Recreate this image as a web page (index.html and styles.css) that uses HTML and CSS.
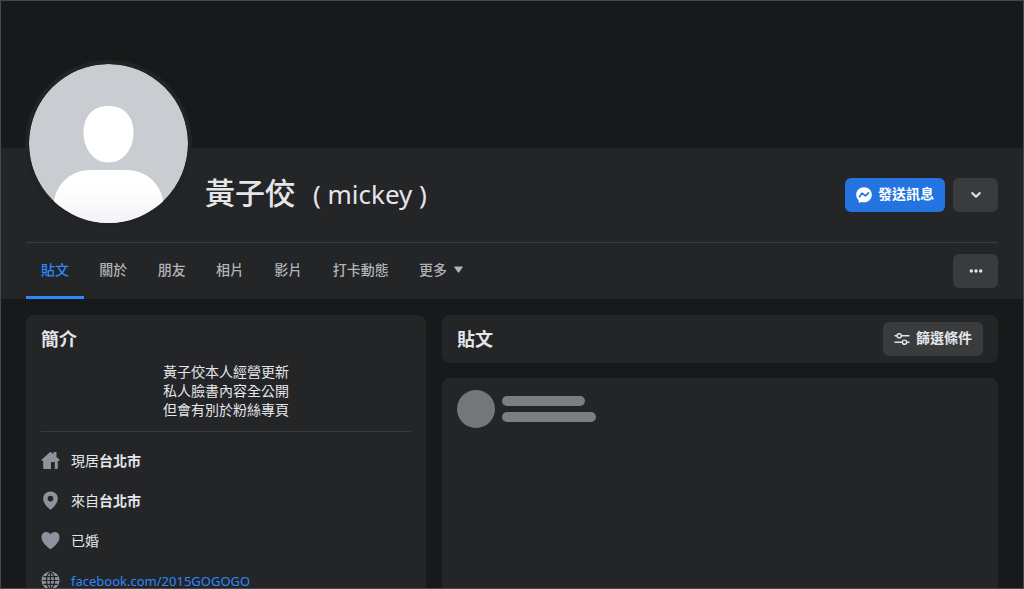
FILE: index.html
```html
<!DOCTYPE html>
<html lang="zh-Hant">
<head>
<meta charset="utf-8">
<meta name="viewport" content="width=device-width, initial-scale=1">
<title>黃子佼 ( mickey )</title>
<link rel="stylesheet" href="styles.css">
</head>
<body>
<div class="page">
  <div class="cover"></div>
  <header class="header">
    <div class="profile">
      <svg class="avatar" viewBox="0 0 167 167" role="img" aria-label="大頭貼照">
        <defs>
          <clipPath id="disc"><circle cx="83.5" cy="83.5" r="79.5"/></clipPath>
          <linearGradient id="shade" x1="0" y1="0" x2="0" y2="1">
            <stop offset="0.3" stop-color="#fff"/><stop offset="1" stop-color="#f1f2f4"/>
          </linearGradient>
        </defs>
        <circle cx="83.5" cy="83.5" r="83.5" fill="#222324"/>
        <g clip-path="url(#disc)">
          <circle cx="83.5" cy="83.5" r="79.5" fill="#c9ccd1"/>
          <path d="M83.5 46C99 46 108.500 56 108.500 73C108.500 89 98 102.500 83.500 102.500S58.500 89 58.500 73C58.500 56 68 46 83.500 46Z" fill="#fff"/>
          <path d="M28 150C28 127 43 110 66 110H101C124 110 139 127 139 150V167H28Z" fill="url(#shade)"/>
        </g>
      </svg>
      <h1 class="name"><span class="name-main">黃子佼</span><span class="name-alt">( mickey )</span></h1>
      <div class="actions">
        <button class="btn btn-primary" type="button">
          <svg class="icon-16" viewBox="0 0 16 16" aria-hidden="true">
            <path d="M8 0.300C3.600 0.300 0.200 3.500 0.200 7.700C0.200 9.900 1.100 11.800 2.600 13.100L2.700 15.100C2.700 15.600 3.200 15.900 3.600 15.700L5.200 15C6.100 15.200 7 15.300 8 15.300C12.400 15.300 15.800 12 15.800 7.700S12.400 0.300 8 0.300Z" fill="#fff"/>
            <path d="M3.500 9.800L6 6.200L9.500 8.900L12.500 5.800" fill="none" stroke="#2374e1" stroke-width="1.700" stroke-linejoin="round" stroke-linecap="round"/>
          </svg>
          <span class="btn-label">發送訊息</span>
        </button>
        <button class="btn btn-icon" type="button" aria-label="更多動作">
          <svg class="icon-16" viewBox="0 0 16 16" aria-hidden="true"><path d="M4.200 6L8 9.800L11.800 6" fill="none" stroke="#e4e6eb" stroke-width="2" stroke-linecap="round" stroke-linejoin="round"/></svg>
        </button>
      </div>
    </div>
    <div class="tabbar">
      <nav class="tabs">
        <a class="tab tab-active" href="#posts" aria-current="page">貼文</a>
        <a class="tab" href="#about">關於</a>
        <a class="tab" href="#friends">朋友</a>
        <a class="tab" href="#photos">相片</a>
        <a class="tab" href="#videos">影片</a>
        <a class="tab" href="#checkins">打卡動態</a>
        <a class="tab" href="#more">更多<svg class="caret" viewBox="0 0 9 7" aria-hidden="true"><path d="M0.800 0.500H8.200Q9 0.700 8.500 1.500L5.200 6.300Q4.500 7 3.800 6.300L0.500 1.500Q0 0.700 0.800 0.500Z" fill="#b0b3b8"/></svg></a>
      </nav>
      <button class="btn btn-icon" type="button" aria-label="更多選項">
        <svg class="icon-16" viewBox="0 0 16 16" aria-hidden="true"><g fill="#e4e6eb"><circle cx="3.300" cy="8" r="1.700"/><circle cx="8" cy="8" r="1.700"/><circle cx="12.700" cy="8" r="1.700"/></g></svg>
      </button>
    </div>
  </header>
  <main class="content">
    <section class="card intro" id="about">
      <h2 class="card-title">簡介</h2>
      <p class="bio">黃子佼本人經營更新<br>私人臉書內容全公開<br>但會有別於粉絲專頁</p>
      <ul class="facts">
        <li class="fact">
          <svg class="fact-icon" viewBox="0 0 20 20" aria-hidden="true"><path d="M9.300 1.300Q10 0.700 10.700 1.300L13 3.300V1.600Q13 1 13.600 1H15.700Q16.300 1 16.300 1.600V6.200L19.300 8.900Q19.900 9.600 19.300 10.200Q19 10.500 18.500 10.500H17.700V18Q17.700 19 16.700 19H14.500V11.500H10.500V19H3.300Q2.300 19 2.300 18V10.500H1.500Q0.900 10.500 0.600 10Q0.300 9.400 0.800 8.900Z"/></svg>
          <span>現居<a class="place" href="#taipei">台北市</a></span>
        </li>
        <li class="fact">
          <svg class="fact-icon" viewBox="0 0 20 20" aria-hidden="true"><path fill-rule="evenodd" d="M10 0.500C5.600 0.500 2.300 3.800 2.300 8C2.300 12.300 5.800 16.300 9.100 19.200Q10 19.900 10.900 19.200C14.200 16.300 17.700 12.300 17.700 8C17.700 3.800 14.400 0.500 10 0.500ZM10 5A3 3 0 1 1 10 11A3 3 0 1 1 10 5Z"/></svg>
          <span>來自<a class="place" href="#taipei">台北市</a></span>
        </li>
        <li class="fact">
          <svg class="fact-icon" viewBox="0 0 20 20" aria-hidden="true"><path d="M10 3.500C8.900 1.900 7.400 1 5.500 1C2.500 1 0.500 3.300 0.500 6.500C0.500 11.500 5.500 15.800 9.200 18.600Q10 19.100 10.800 18.600C14.500 15.800 19.500 11.500 19.500 6.500C19.500 3.300 17.500 1 14.500 1C12.600 1 11.100 1.900 10 3.500Z"/></svg>
          <span>已婚</span>
        </li>
        <li class="fact">
          <svg class="fact-icon" viewBox="0 0 20 20" aria-hidden="true"><circle cx="10" cy="10" r="9.500"/><g fill="none" stroke="#242526" stroke-width="1.300"><path d="M1.500 10H18.500M10 1.500V18.500M2.500 5.800H17.500M2.500 14.200H17.500"/><ellipse cx="10" cy="10" rx="4.300" ry="8.500"/></g></svg>
          <a class="link" href="#site">facebook.com/2015GOGOGO</a>
        </li>
      </ul>
    </section>
    <div class="feed" id="posts">
      <section class="card feed-head">
        <h2 class="card-title">貼文</h2>
        <button class="btn" type="button">
          <svg class="icon-16" viewBox="0 0 16 16" aria-hidden="true"><g fill="none" stroke="#e4e6eb" stroke-width="1.400" stroke-linecap="round"><path d="M1 4.800H2.500M8 4.800H15M1 11.200H7.500M13.300 11.200H15"/><circle cx="5.200" cy="4.800" r="2.100"/><circle cx="10.500" cy="11.200" r="2.100"/></g></svg>
          <span class="btn-label">篩選條件</span>
        </button>
      </section>
      <section class="card loading" aria-label="載入中">
        <div class="ghost-avatar"></div>
        <div class="ghost-lines"><div class="ghost-line"></div><div class="ghost-line ghost-line-long"></div></div>
      </section>
    </div>
  </main>
</div>
</body>
</html>
```
FILE: styles.css
```css
* { box-sizing: border-box; }

body {
  margin: 0;
  background: #18191a;
  color: #e4e6eb;
  font-family: "Noto Sans", "Noto Sans CJK TC", sans-serif;
  font-size: 14px;
  line-height: 19px;
}

h1, h2, p, ul { margin: 0; padding: 0; font-weight: 400; }
ul { list-style: none; }
a { color: inherit; text-decoration: none; }

.page {
  display: flex;
  flex-direction: column;
  height: 100vh;
  border: 1px solid #47484a;
  overflow: hidden;
}

.cover { flex: none; height: 147px; }

.header { flex: none; padding: 0 25px; background: #242526; }

.profile {
  display: flex;
  align-items: center;
  height: 95px;
  border-bottom: 1px solid #3a3b3c;
}

.avatar {
  flex: none;
  align-self: flex-end;
  width: 167px;
  height: 167px;
  margin: 0 13px 15px -1px;
}

.name {
  display: flex;
  align-items: baseline;
  gap: 18px;
  flex: 1;
  padding-bottom: 3px;
  line-height: 40px;
  white-space: nowrap;
}
.name-main { font-size: 30px; font-weight: 500; }
.name-alt { font-size: 26px; }

.actions { display: flex; gap: 8px; }

.btn {
  display: flex;
  align-items: center;
  justify-content: center;
  gap: 6px;
  height: 34px;
  padding: 0 11px;
  border: 0;
  border-radius: 6px;
  background: #3a3b3c;
  color: #e4e6eb;
  font: inherit;
  font-weight: 700;
  white-space: nowrap;
}
.btn-label { padding-bottom: 3px; }
.btn-primary { background: #2374e1; color: #fff; }
.btn-icon { width: 45px; }

.icon-16 { flex: none; width: 16px; height: 16px; }

.tabbar {
  display: flex;
  align-items: center;
  justify-content: space-between;
  height: 56px;
}

.tabs {
  display: flex;
  justify-content: space-between;
  width: 452px;
  height: 100%;
  color: #b0b3b8;
  font-weight: 500;
}
.tab {
  display: flex;
  align-items: center;
  gap: 7px;
  padding: 0 15px;
  border-bottom: 3px solid transparent;
}
.tab-active { color: #2d88ff; border-color: #2d88ff; }
.caret { width: 9px; height: 7px; }

.content {
  flex: 1;
  display: flex;
  gap: 16px;
  min-height: 0;
  padding: 16px 25px 0;
}

.card { border-radius: 8px 8px 0 0; background: #242526; }
.card-title { font-size: 18px; font-weight: 700; line-height: 24px; }

.intro { flex: 0 1 400px; padding: 12px 15px 0; overflow: hidden; }
.bio {
  padding: 11px 0 12px;
  border-bottom: 1px solid #3a3b3c;
  text-align: center;
}

.facts { display: flex; flex-direction: column; gap: 21px; padding-top: 19px; }
.fact { display: flex; align-items: center; gap: 11px; white-space: nowrap; }
.fact-icon { flex: none; width: 19px; height: 19px; fill: #8c939d; }
.place { font-weight: 700; }
.link { color: #2d88ff; font-size: 13px; line-height: 16px; }

.feed { flex: 1; display: flex; flex-direction: column; gap: 15px; }
.feed-head {
  display: flex;
  align-items: center;
  justify-content: space-between;
  height: 48px;
  padding: 0 15px;
  border-radius: 8px;
}

.loading { flex: 1; display: flex; gap: 7px; padding: 12px 15px; }
.ghost-avatar { width: 38px; height: 38px; border-radius: 50%; background: #74777a; }
.ghost-lines { display: flex; flex-direction: column; gap: 6px; padding-top: 6px; }
.ghost-line { width: 83px; height: 10px; border-radius: 5px; background: #7d7e80; }
.ghost-line-long { width: 94px; }
```
